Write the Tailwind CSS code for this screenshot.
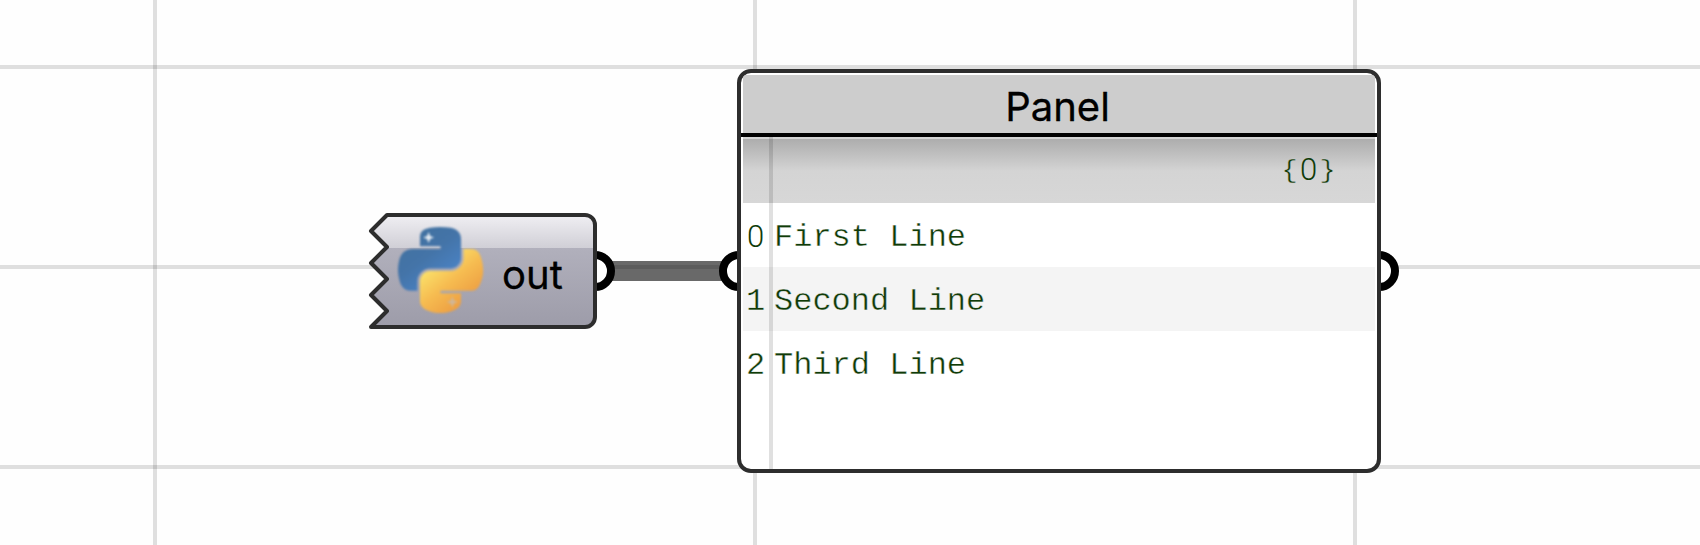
<!DOCTYPE html>
<html lang="en">
<head>
<meta charset="utf-8">
<title>Canvas</title>
<script src="https://cdn.jsdelivr.net/npm/@tailwindcss/browser@4"></script>
</head>
<body class="bg-white">
<main class="relative h-[545px] w-[1700px] overflow-hidden bg-[#fefefe]">
  <!-- canvas grid -->
  <div class="absolute inset-y-0 left-[153px] w-1 bg-black/12"></div>
  <div class="absolute inset-y-0 left-[753px] w-1 bg-black/12"></div>
  <div class="absolute inset-y-0 left-[1353px] w-1 bg-black/12"></div>
  <div class="absolute inset-x-0 top-[65px] h-1 bg-black/12"></div>
  <div class="absolute inset-x-0 top-[265px] h-1 bg-black/12"></div>
  <div class="absolute inset-x-0 top-[465px] h-1 bg-black/12"></div>

  <!-- wire -->
  <div class="absolute left-[605px] top-[261px] h-5 w-[124px] bg-black/59"></div>

  <!-- grips -->
  <div class="absolute left-[575px] top-[251px] size-10 rounded-full border-8 border-black bg-white"></div>
  <div class="absolute left-[719px] top-[251px] size-10 rounded-full border-8 border-black bg-white"></div>
  <div class="absolute left-[1359px] top-[251px] size-10 rounded-full border-8 border-black bg-white"></div>

  <!-- python output parameter -->
  <section class="absolute left-[360px] top-[205px] h-[132px] w-[240px]">
    <svg class="absolute inset-0" width="240" height="132" viewBox="360 205 240 132" fill="none">
      <defs>
        <linearGradient id="body" x1="0" y1="248" x2="0" y2="327" gradientUnits="userSpaceOnUse"><stop stop-color="#b1b0bc"/><stop offset="1" stop-color="#9d9ca9"/></linearGradient>
        <linearGradient id="gloss" x1="0" y1="215" x2="0" y2="248" gradientUnits="userSpaceOnUse"><stop stop-color="#f0eff3"/><stop offset="1" stop-color="#d0cfd6"/></linearGradient>
        <clipPath id="shape"><path d="M387 215H585a10 10 0 0 1 10 10V317a10 10 0 0 1-10 10H371L387 311L371 295L387 279L371 263L387 247L371 231Z"/></clipPath>
      </defs>
      <g clip-path="url(#shape)">
        <path fill="url(#body)" d="M360 248h240v84H360z"/>
        <path fill="url(#gloss)" d="M360 210h240v38H360z"/>
      </g>
      <path stroke="#2d2d2d" stroke-width="4" stroke-linejoin="round" d="M387 215H585a10 10 0 0 1 10 10V317a10 10 0 0 1-10 10H371L387 311L371 295L387 279L371 263L387 247L371 231Z"/>
    </svg>
    <div class="relative flex h-full items-center pl-[37.500px]">
      <svg class="mb-[3px] size-[85px] shrink-0 overflow-visible blur-[0.8px]" viewBox="0 0 111 111">
        <defs>
          <linearGradient id="blue" x1="20" y1="0" x2="70" y2="65" gradientUnits="userSpaceOnUse"><stop stop-color="#41719f"/><stop offset=".5" stop-color="#4474a8"/><stop offset="1" stop-color="#4a83c6"/></linearGradient>
          <linearGradient id="yellow" x1="40" y1="50" x2="80" y2="100" gradientUnits="userSpaceOnUse"><stop stop-color="#fbe36b"/><stop offset=".55" stop-color="#f6bb50"/><stop offset="1" stop-color="#eea244"/></linearGradient>
        </defs>
        <path fill="url(#blue)" d="M54.92 0c-4.58.02-8.96.41-12.81 1.09C30.76 3.1 28.7 7.3 28.7 15.03v10.22h26.81v3.41H18.64c-7.79 0-14.62 4.68-16.75 13.59-2.46 10.21-2.57 16.59 0 27.25 1.91 7.94 6.46 13.6 14.25 13.6h9.22V70.85c0-8.85 7.66-16.66 16.75-16.66h26.78c7.46 0 13.41-6.14 13.41-13.62V15.03c0-7.26-6.13-12.72-13.41-13.94C64.28.33 59.5-.02 54.92 0Z"/>
        <path fill="url(#yellow)" d="M85.64 28.66v11.9c0 9.23-7.83 17-16.75 17H42.11c-7.34 0-13.41 6.28-13.41 13.63v25.53c0 7.27 6.32 11.54 13.41 13.62 8.48 2.5 16.62 2.95 26.78 0 6.75-1.95 13.41-5.88 13.41-13.62V86.5H55.51v-3.4h40.19c7.79 0 10.7-5.44 13.41-13.6 2.8-8.4 2.74-16.47 0-27.25-1.93-7.75-5.61-13.59-13.41-13.59Z"/>
        <path fill="#e4ebf2" d="M40 6.500l2 5.200 5.200 2-5.200 2-2 5.200-2-5.200-5.200-2 5.200-2z"/>
        <path fill="#d0b698" d="M71 90.500l2 5.400 5.400 2-5.400 2-2 5.400-2-5.400-5.400-2 5.400-2z"/>
      </svg>
      <span class="ml-[19.500px] mt-2 font-['Inter'] text-[40px] leading-none text-black [-webkit-text-stroke:0.3px_black]">out</span>
    </div>
  </section>

  <!-- text panel -->
  <section class="absolute left-[737px] top-[69px] h-[404px] w-[644px] overflow-hidden rounded-[14px] border-4 border-[#2d2d2d] bg-white">
    <div class="flex h-full flex-col pt-0.5 font-['Liberation_Mono',monospace] text-[32px] leading-none text-[#103b08]">
      <header class="mx-0.5 flex h-[58px] shrink-0 items-center justify-center bg-[#cdcdcd] pr-[3px] pt-1.5 font-['Inter'] text-[40px] text-black [-webkit-text-stroke:0.3px_black]">Panel</header>
      <div class="h-1 shrink-0 bg-black"></div>
      <div class="mx-0.5 h-0.5 shrink-0 bg-[#d3d3d3]"></div>
      <div class="mx-0.5 flex h-16 shrink-0 items-center justify-end bg-linear-to-b from-[#adadad] via-[#d4d4d4] via-50% to-[#d7d7d7] pr-[38px]">
        <span class="w-[19px] text-center text-[26px] [-webkit-text-stroke:0.3px_#d0d0d0]">{</span><span class="mb-1 flex w-[19px] justify-center font-['Roboto'] text-[31px] font-light">0</span><span class="w-[19px] text-center text-[26px] [-webkit-text-stroke:0.3px_#d0d0d0]">}</span>
      </div>
      <div class="mx-0.5 flex h-16 shrink-0 items-center pt-1.5 [-webkit-text-stroke:0.4px_white]"><span class="mb-1 ml-[3px] flex w-[19px] justify-center font-['Roboto'] text-[31px] font-light [-webkit-text-stroke:0]">0</span><span class="ml-[9px]">First Line</span></div>
      <div class="mx-0.5 flex h-16 shrink-0 items-center bg-[#f4f4f4] pt-1.5 [-webkit-text-stroke:0.4px_#f4f4f4]"><span class="ml-[3px] w-[19px]">1</span><span class="ml-[9px]">Second Line</span></div>
      <div class="mx-0.5 flex h-16 shrink-0 items-center pt-1.5 [-webkit-text-stroke:0.4px_white]"><span class="ml-[3px] w-[19px]">2</span><span class="ml-[9px]">Third Line</span></div>
    </div>
    <div class="absolute bottom-0 left-7 top-16 w-1 bg-black/12"></div>
  </section>
</main>
</body>
</html>
